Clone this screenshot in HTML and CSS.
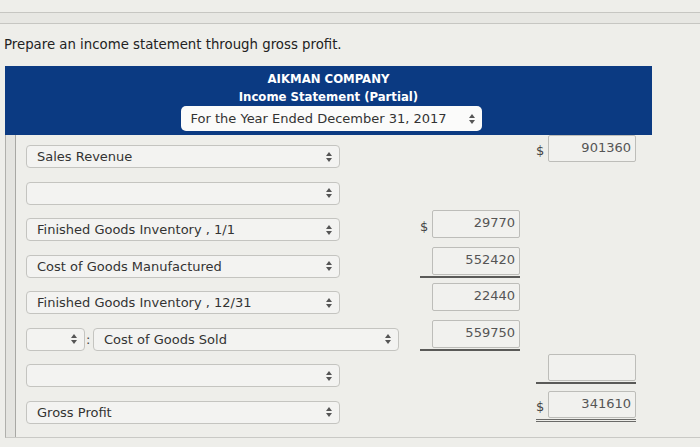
FILE: index.html
```html
<!DOCTYPE html>
<html>
<head>
<meta charset="utf-8">
<link rel="stylesheet" href="styles.css">
</head>
<body>
<div class="topbar"></div>
<p class="prompt">Prepare an income statement through gross profit.</p>
<div class="sheet">
  <div class="head">
    <div class="h1">AIKMAN COMPANY</div>
    <div class="h2">Income Statement (Partial)</div>
    <div class="date"><span>For the Year Ended December 31, 2017</span><svg class="arr" viewBox="0 0 6 10"><path d="M0 4L3 0L6 4Z M0 6L3 10L6 6Z"/></svg></div>
  </div>
  <div class="form">
    <div class="row">
      <div class="sel"><span>Sales Revenue</span><svg class="arr" viewBox="0 0 6 10"><path d="M0 4L3 0L6 4Z M0 6L3 10L6 6Z"/></svg></div>
      <div class="cell c3"><span class="dollar">$</span><div class="num">901360</div></div>
    </div>
    <div class="row">
      <div class="sel"><span></span><svg class="arr" viewBox="0 0 6 10"><path d="M0 4L3 0L6 4Z M0 6L3 10L6 6Z"/></svg></div>
    </div>
    <div class="row">
      <div class="sel"><span>Finished Goods Inventory , 1/1</span><svg class="arr" viewBox="0 0 6 10"><path d="M0 4L3 0L6 4Z M0 6L3 10L6 6Z"/></svg></div>
      <div class="cell c2"><span class="dollar">$</span><div class="num">29770</div></div>
    </div>
    <div class="row">
      <div class="sel"><span>Cost of Goods Manufactured</span><svg class="arr" viewBox="0 0 6 10"><path d="M0 4L3 0L6 4Z M0 6L3 10L6 6Z"/></svg></div>
      <div class="cell c2 ul"><span class="dollar"></span><div class="num">552420</div></div>
    </div>
    <div class="row">
      <div class="sel"><span>Finished Goods Inventory , 12/31</span><svg class="arr" viewBox="0 0 6 10"><path d="M0 4L3 0L6 4Z M0 6L3 10L6 6Z"/></svg></div>
      <div class="cell c2"><span class="dollar"></span><div class="num">22440</div></div>
    </div>
    <div class="row">
      <div class="pair">
        <div class="sel small"><span></span><svg class="arr" viewBox="0 0 6 10"><path d="M0 4L3 0L6 4Z M0 6L3 10L6 6Z"/></svg></div>
        <span class="colon">:</span>
        <div class="sel wide"><span>Cost of Goods Sold</span><svg class="arr" viewBox="0 0 6 10"><path d="M0 4L3 0L6 4Z M0 6L3 10L6 6Z"/></svg></div>
      </div>
      <div class="cell c2 ul"><span class="dollar"></span><div class="num">559750</div></div>
    </div>
    <div class="row">
      <div class="sel"><span></span><svg class="arr" viewBox="0 0 6 10"><path d="M0 4L3 0L6 4Z M0 6L3 10L6 6Z"/></svg></div>
      <div class="cell c3 ul"><span class="dollar"></span><div class="num"></div></div>
    </div>
    <div class="row">
      <div class="sel"><span>Gross Profit</span><svg class="arr" viewBox="0 0 6 10"><path d="M0 4L3 0L6 4Z M0 6L3 10L6 6Z"/></svg></div>
      <div class="cell c3 dbl"><span class="dollar">$</span><div class="num">341610</div></div>
    </div>
  </div>
</div>
</body>
</html>
```
FILE: styles.css
```css
html, body {
  margin: 0;
  padding: 0;
  background: #eeeeea;
  font-family: "DejaVu Sans", Verdana, sans-serif;
  color: #333;
}

.topbar {
  margin-top: 12px;
  height: 10px;
  border-top: 1px solid #c6c6c2;
  border-bottom: 1px solid #c6c6c2;
  background: #e7e7e3;
}

.prompt {
  margin: 13px 0 13px 4px;
  font-size: 13.3px;
  line-height: 16px;
  color: #222;
}

.sheet {
  margin-left: 5px;
}

.head {
  width: 647px;
  height: 69px;
  box-sizing: border-box;
  background: #0b3a82;
  padding-top: 5px;
  display: flex;
  flex-direction: column;
  align-items: center;
  color: #fff;
  font-family: "DejaVu Sans Condensed", "DejaVu Sans", sans-serif;
  font-stretch: condensed;
  font-weight: bold;
  font-size: 13px;
}

.h1, .h2 {
  line-height: 15px;
  height: 15px;
}

.h2 {
  margin-top: 3px;
}

.date {
  margin-top: 2px;
  margin-left: 5px;
  width: 301px;
  height: 25px;
  box-sizing: border-box;
  background: #fbfbfa;
  border-radius: 5px;
  display: flex;
  align-items: center;
  justify-content: space-between;
  padding: 0 7px 0 10px;
  font-family: "DejaVu Sans", sans-serif;
  font-stretch: normal;
  font-weight: normal;
  font-size: 13px;
  color: #333;
}

.arr {
  width: 6px;
  height: 10px;
  fill: #555;
  flex: none;
}

.form {
  border-left: 1px solid #b0b0ac;
  box-shadow: inset 9px 0 0 #e4e4e0, inset 10px 0 0 #a8a8a4;
  padding: 0 0 10px 20px;
  border-bottom: 1px solid #c9c9c5;
}

.row {
  display: grid;
  grid-template-columns: 380px 102px 102px;
  column-gap: 14px;
  height: 36.5px;
  align-items: start;
}

.sel {
  margin-top: 10px;
  width: 314px;
  height: 23px;
  box-sizing: border-box;
  border: 1px solid #c4c4c0;
  border-radius: 4px;
  background: #f3f3f1;
  display: flex;
  align-items: center;
  justify-content: space-between;
  padding: 0 7px 0 10px;
  font-size: 13px;
  color: #333;
}

.pair {
  display: flex;
  align-items: flex-start;
}

.sel.small {
  width: 59px;
}

.sel.wide {
  width: 306px;
}

.colon {
  width: 7px;
  margin-top: 15px;
  padding-left: 1px;
  font-size: 13px;
  line-height: 14px;
  color: #444;
}

.cell {
  display: flex;
  align-items: flex-end;
  width: 100px;
  margin-top: 2px;
}

.c2 {
  grid-column: 2;
}

.c3 {
  grid-column: 3;
  margin-top: 0;
}

.dollar {
  width: 12px;
  font-size: 13px;
  line-height: 16px;
  padding-bottom: 3px;
  color: #444;
}

.num {
  width: 88px;
  height: 28px;
  box-sizing: border-box;
  border: 1px solid #bdbdb9;
  border-radius: 2px;
  background: #f1f1ee;
  text-align: right;
  padding: 3px 4px 0 0;
  font-size: 13px;
  line-height: 18px;
  color: #555;
}

.c3 .num {
  height: 27px;
}

.ul {
  border-bottom: 2px solid #5a5a58;
  padding-bottom: 1px;
}

.dbl {
  border-bottom: 3px double #6a6a68;
  padding-bottom: 1px;
}
```
